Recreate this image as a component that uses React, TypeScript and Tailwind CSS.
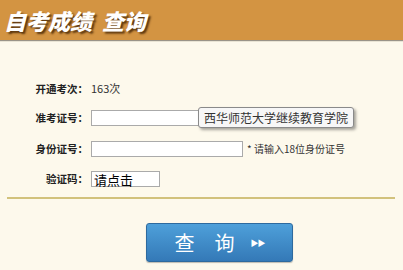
import React from 'react';

const cjk = { fontFamily: '"Noto Sans CJK SC", "Liberation Sans", sans-serif' };

const Row: React.FC<{ label: string; h: string; children: React.ReactNode }> = ({ label, h, children }) => (
    <div className={`flex items-center ${h}`}>
        <div className="w-[90px] text-right text-[10.5px] font-bold text-[#222] pr-[2px]">{label}</div>
        <div className="flex items-center pl-[1px] relative">{children}</div>
    </div>
);

const App: React.FC = () => {
    return (
        <div className="w-[403px] h-[270px] bg-[#fdf9ec] overflow-hidden" style={cjk}>
            {/* header bar */}
            <div className="h-[40px] bg-[#d39442] flex items-center pl-[4px]">
                <h1 className="text-[22px] font-black italic text-white leading-none [text-shadow:2px_2px_2px_rgba(60,30,0,0.8)]">
                    自考成绩&nbsp;&nbsp;查询
                </h1>
            </div>
            <div className="h-[1px] bg-[#9a9488]" />
            <div className="h-[1px] bg-[#e9e4d4]" />

            <div className="pt-[32px]">
                <Row label="开通考次：" h="h-[29px]">
                    <span className="text-[11px] text-[#333]">163次</span>
                </Row>
                <Row label="准考证号：" h="h-[30px]">
                    <input className="w-[110px] h-[16px] bg-white border border-[#aaa] outline-none" />
                    <div className="absolute left-[108px] top-[-3px] h-[21px] w-[156px] flex items-center justify-center bg-[#f7f7f7] border border-[#8a8a8a] rounded-[3px] shadow-[2px_2px_3px_rgba(0,0,0,0.35)] text-[12px] text-[#333] whitespace-nowrap">
                        西华师范大学继续教育学院
                    </div>
                </Row>
                <Row label="身份证号：" h="h-[31px]">
                    <input className="w-[152px] h-[16px] bg-white border border-[#aaa] outline-none" />
                    <span className="ml-[4px] text-[10px] text-[#333]">* 请输入18位身份证号</span>
                </Row>
                <Row label="验证码：" h="h-[30px]">
                    <div className="w-[69px] h-[16px] bg-white border border-[#aaa] flex items-center pl-[2px] text-[13px] text-black leading-none">
                        请点击
                    </div>
                </Row>
            </div>

            <div className="mt-[3px] ml-[7px] w-[388px] h-[2px] bg-[#d2c27c]" />

            <div className="flex pl-[146px] pt-[24px]">
                <button className="w-[147px] h-[39px] rounded-[3px] border border-[#2e6a9e] bg-gradient-to-b from-[#4ea0da] to-[#3479b7] text-white flex items-center justify-center shadow-[0_1px_1px_rgba(0,0,0,0.25)]">
                    <span className="text-[20px]">查</span>
                    <span className="text-[20px] ml-[20px]">询</span>
                    <span className="text-[8px] ml-[16px] tracking-[-1px]">▶▶</span>
                </button>
            </div>
        </div>
    );
};

export default App;
